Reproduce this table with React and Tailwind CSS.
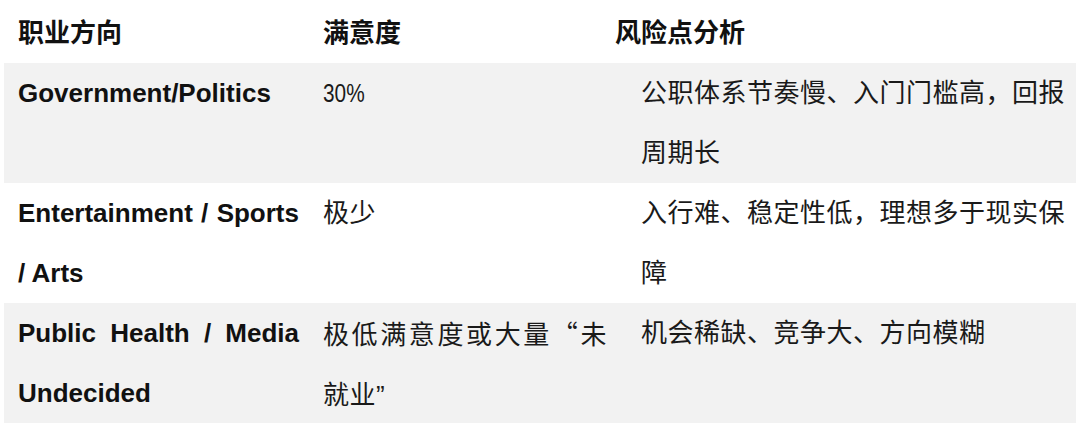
export default function App() {
  const font = { fontFamily: '"Liberation Sans", "Noto Sans CJK SC", sans-serif' };
  const cjk = { fontFamily: '"Noto Sans CJK SC", sans-serif' };
  const rows = [
    {
      bg: "bg-[#f2f2f2]",
      c1: "Government/Politics",
      c2: (
        <span className="inline-block origin-left scale-x-80 tracking-normal">30%</span>
      ),
      c3: "公职体系节奏慢、入门门槛高，回报周期长",
    },
    {
      bg: "bg-white",
      c1: "Entertainment / Sports / Arts",
      c2: "极少",
      c3: "入行难、稳定性低，理想多于现实保障",
    },
    {
      bg: "bg-[#f2f2f2]",
      c1: "Public Health / Media Undecided",
      c2: (
        <>
          极低满意度或大量<span style={cjk}>“</span>未就业”
        </>
      ),
      c3: "机会稀缺、竞争大、方向模糊",
    },
  ];
  return (
    <div className="w-[1080px] h-[424px] bg-white text-[26px] leading-[60px] text-[#1a1a1a] px-[4px]" style={font}>
      <div className="grid grid-cols-[305px_306px_1fr] h-[63px] pt-[3px] font-bold text-[#111]">
        <div className="pl-[14px]">职业方向</div>
        <div className="pl-[14px]">满意度</div>
        <div>风险点分析</div>
      </div>
      {rows.map((r, i) => (
        <div key={i} className={`grid grid-cols-[305px_324px_1fr] h-[120px] ${r.bg}`}>
          <div className="pl-[14px] pr-[10px] font-bold text-[#111] text-justify">{r.c1}</div>
          <div className="pl-[14px] pr-[26px] text-justify tracking-[0.5px]">{r.c2}</div>
          <div className="pl-[8px] pr-[4px] tracking-[0.5px]">{r.c3}</div>
        </div>
      ))}
    </div>
  );
}
